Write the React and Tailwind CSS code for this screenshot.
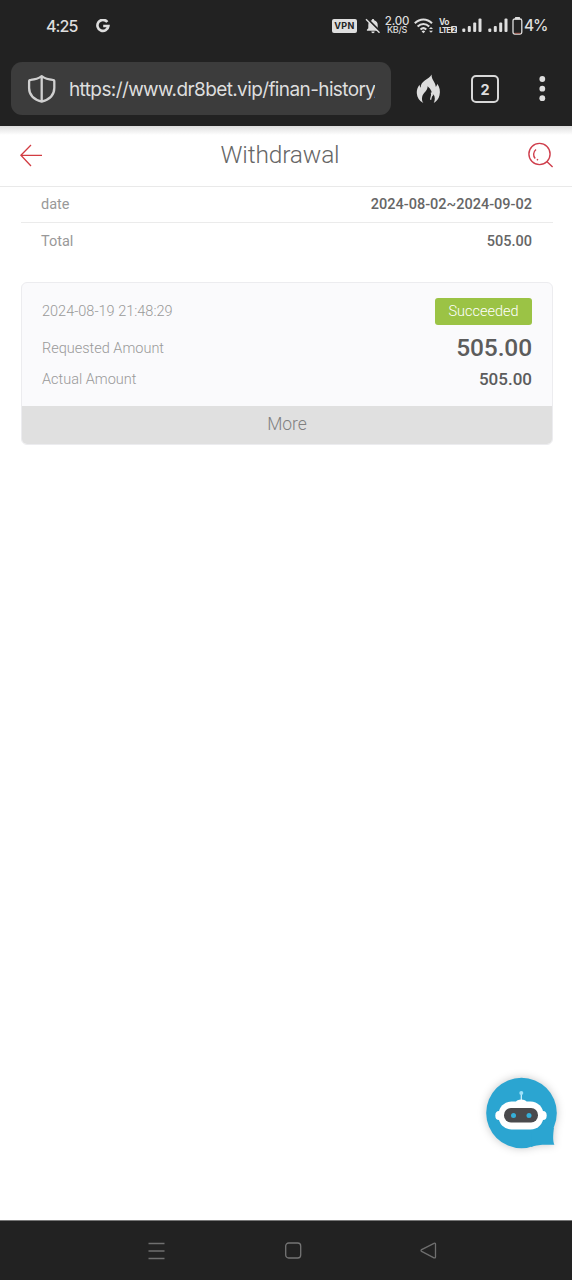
import React from "react";

function SignalBars() {
  return (
    <svg width="20" height="16" viewBox="0 0 20 16" fill="#dedede">
      <rect x="0.3" y="10.5" width="3" height="3.5" rx="1" />
      <rect x="5.8" y="8" width="3" height="6" rx="1" />
      <rect x="11.2" y="4.5" width="3" height="9.5" rx="1" />
      <rect x="16.5" y="0.5" width="3" height="13.5" rx="1" />
    </svg>
  );
}

function StatusBar() {
  return (
    <div className="flex h-[51px] items-center pl-[46px] font-['Inter','Noto_Sans',sans-serif] text-[#dedede]">
      <span className="w-[50px] whitespace-nowrap text-[16px] font-medium tracking-[-0.9px]">4:25</span>
      <svg width="14" height="14" viewBox="0 0 14 14" fill="none" stroke="#dedede" strokeWidth="2.6">
        <path d="M11.3 3A5.5 5.5 0 1 0 12.4 7H7.2" />
      </svg>
      <span className="ml-[222px] flex h-[14px] w-[25px] items-center justify-center rounded-[2px] bg-[#dedede] text-[9px] font-bold tracking-[0.4px] text-[#222]">VPN</span>
      <svg className="ml-[8px]" width="16" height="16" viewBox="0 0 16 16">
        <path d="M8 1c.7 0 1.2.5 1.2 1.2C11.500 2.800 12.700 4.500 12.700 7v3.300l1.400 1.500v1H1.900v-1l1.400-1.500V7c0-2.500 1.200-4.200 3.500-4.800C6.800 1.500 7.300 1 8 1ZM6.300 13.600h3.400a1.700 1.700 0 0 1-3.400 0Z" fill="#dedede" />
        <path d="m2.300.8 13 13" stroke="#222" strokeWidth="2" />
        <path d="m1 1.300 13.500 13.500" stroke="#dedede" strokeWidth="1.400" />
      </svg>
      <span className="ml-[4px] flex w-[24px] flex-col items-center font-medium">
        <span className="text-[11.500px] leading-[9px] tracking-[-0.200px]">2.00</span>
        <span className="text-[9px] leading-[8px] tracking-[-0.300px]">KB/S</span>
      </span>
      <svg className="ml-[5px]" width="20" height="16" viewBox="0 0 20 16" fill="none" stroke="#dedede" strokeWidth="2">
        <path d="M.8 5.300c5-5.200 12.200-5.200 17.200 0M3.600 8.500c3.500-3.500 8.100-3.500 11.600 0M6.500 11.500c1.800-1.700 4-1.700 5.800 0" />
        <path d="m7.600 13.400 1.800 1.900 1.800-1.900a2.600 2.600 0 0 0-3.600 0Z" fill="#dedede" stroke="none" />
        <path d="m15 11 2-2 2 2ZM15 12.700l2 2 2-2Z" fill="#dedede" stroke="none" />
      </svg>
      <span className="ml-[5px] flex w-[18px] flex-col font-bold">
        <span className="text-[8.500px] leading-[8px] tracking-[-0.500px]">Vo</span>
        <span className="flex items-center text-[8px] leading-[8px] tracking-[-0.900px]">
          LTE
          <span className="ml-[1px] flex h-[7px] w-[6px] items-center justify-center rounded-[1px] bg-[#dedede] text-[6px] tracking-normal text-[#222]">2</span>
        </span>
      </span>
      <span className="ml-[5px]"><SignalBars /></span>
      <span className="ml-[6px]"><SignalBars /></span>
      <svg className="ml-[4px]" width="11" height="18" viewBox="0 0 11 18">
        <rect x="3" y="0" width="5" height="2.500" rx=".5" fill="#dedede" />
        <rect x="1" y="2" width="8.800" height="15" rx="1.700" fill="none" stroke="#dedede" strokeWidth="1.300" />
        <path d="M2.500 16.300h6" stroke="#a45c50" />
      </svg>
      <span className="ml-[1px] text-[15.500px] font-medium tracking-[-1.200px]">4%</span>
    </div>
  );
}

function BrowserBar() {
  return (
    <div className="flex h-[75px] items-start pl-[11px] pt-[11px]">
      <div className="flex h-[53px] w-[380px] items-center rounded-[11px] bg-[#3c3c3c] pl-[16px]">
        <svg width="30" height="30" viewBox="0 0 30 30" fill="none" stroke="#d0d0d0" strokeWidth="2.300" strokeLinejoin="round">
          <path d="M14.700 2.200c-3 2.300-7 3.500-11 3.600-1 0-1.600.6-1.600 1.600V14c0 6.500 5 11.500 12.600 13.700C22.300 25.500 27.300 20.500 27.300 14V7.400c0-1-.6-1.600-1.600-1.600-4-.1-8-1.300-11-3.600ZM14.700 2.200v25.500" />
        </svg>
        <div className="ml-[12px] w-[306px] overflow-hidden whitespace-nowrap pt-[3px] font-['Inter','Noto_Sans',sans-serif] text-[19px] tracking-[-0.610px] text-[#dedede]">https://www.dr8bet.vip/finan-history/</div>
      </div>
      <svg className="ml-[25px] mt-[12px]" width="25" height="30" viewBox="0 0 25 30">
        <path d="M15.600.5c-.2 4 2.200 6.500 3.300 9 .5 1.200.8 2.200.8 3.300 1-.9 1.500-2 1.600-3.100 2.500 3.500 3.200 7.500 2.200 11.500-.8 3.500-2.700 6-5.700 7.800 1.300-2.700 1.500-5.700-.2-8.700-.2 1-.6 1.700-1.400 2.300.3-4-1-7.500-4.600-10.300.2 4.500-4.500 6.500-5.400 10.500-.6 2.500 0 4.600 1.100 6.300C3.400 27 1 23.700.8 19.300.6 16 1.500 13.400 3.500 10.800c.1 1.200.5 2.100 1.200 2.900C4.500 6.500 13 5.500 15.600.5Z" fill="#dedede" />
        <path d="M15.300 18.500c1.500 3-.8 4.700-.6 7.200" fill="none" stroke="#dedede" strokeWidth="1.300" />
      </svg>
      <div className="ml-[30px] mt-[13px] flex h-[28px] w-[28px] items-center justify-center rounded-[5px] border-[2.500px] border-[#d8d8d8] pt-px font-['Inter',sans-serif] text-[14.500px] font-bold text-[#dedede]">2</div>
      <svg className="ml-[40px] mt-[13px]" width="7" height="28" viewBox="0 0 7 28" fill="#dedede">
        <circle cx="3.300" cy="4" r="2.900" />
        <circle cx="3.300" cy="13.700" r="2.900" />
        <circle cx="3.300" cy="23.200" r="2.900" />
      </svg>
    </div>
  );
}

function PageHeader() {
  return (
    <header className="flex h-[61px] items-center justify-between border-b border-[#e9e9e9] bg-gradient-to-b from-[#dedede] via-white via-15% to-white pl-[20px] pr-[18px]">
      <svg width="23" height="24" viewBox="0 0 23 24" fill="none" stroke="#d23c42" strokeWidth="1.300">
        <path d="M22 11.300H1M11 1 .9 11.300 11 22" />
      </svg>
      <h1 className="mr-[10px] -mt-px text-[24.500px] font-light tracking-[-0.150px] text-[#666]">Withdrawal</h1>
      <svg className="-mt-[2px]" width="27" height="27" viewBox="0 0 27 27" fill="none" stroke="#cf3e4c" strokeWidth="1.400">
        <circle cx="12.500" cy="12" r="10.600" />
        <path d="m19.800 19.500 5.800 5.600M9 7.500c-3 2.500-3 6.500-.8 9M9.800 17.400l1.300.6" />
      </svg>
    </header>
  );
}

function Summary() {
  return (
    <section className="ml-[21px] mr-[19px] text-[14.500px] text-[#999]">
      <div className="flex h-[36px] items-center justify-between border-b border-[#ebebeb] pl-[20px] pr-[21px]">
        <span>date</span>
        <span className="font-medium text-[#666]">2024-08-02~2024-09-02</span>
      </div>
      <div className="flex h-[38px] items-center justify-between pl-[20px] pr-[21px]">
        <span>Total</span>
        <span className="font-medium text-[#666]">505.00</span>
      </div>
    </section>
  );
}

function Transaction() {
  return (
    <section className="ml-[21px] mr-[19px] mt-[21px] h-[163px] overflow-hidden rounded-[6px] border border-[#ececef] bg-[#fafafc]">
      <div className="flex h-[123px] flex-col px-[20px] pt-[15px] text-[14.500px] font-light text-[#999]">
        <div className="flex h-[27px] items-center justify-between">
          <span>2024-08-19 21:48:29</span>
          <span className="flex h-[27px] w-[97px] items-center justify-center rounded-[3px] bg-[#9bc345] text-white">Succeeded</span>
        </div>
        <div className="mt-[6px] flex h-[34px] items-center justify-between">
          <span className="pt-px">Requested Amount</span>
          <span className="text-[24.500px] font-medium tracking-[-0.100px] text-[#5c5c5c]">505.00</span>
        </div>
        <div className="flex h-[29px] items-center justify-between">
          <span>Actual Amount</span>
          <span className="text-[17px] font-medium text-[#5c5c5c]">505.00</span>
        </div>
      </div>
      <button className="block h-[38px] w-full bg-[#e0e0e0] pb-[2px] text-[17.500px] font-light text-[#808080]">More</button>
    </section>
  );
}

function ChatBot() {
  return (
    <svg className="absolute right-0 bottom-[60px] overflow-visible" width="100" height="100" viewBox="0 0 100 100">
      <g fill="#2ba5d1" style={{ filter: "drop-shadow(0 0 4px rgba(0,0,0,.22))" }}>
        <circle cx="49.500" cy="53" r="35.300" />
        <path d="M59 87c8-3 15-2 23.400-2.200-1.500-3.500-1.600-9-.4-17.300L60 69Z" />
      </g>
      <path d="M49.300 33v7" stroke="#d9f3ff" strokeWidth="1.200" />
      <circle cx="49.300" cy="33" r="2" fill="#9ee2fb" />
      <path d="M44 42c0-3.500 10.500-3.500 10.500 0Z" fill="white" />
      <ellipse cx="27" cy="55.500" rx="3.700" ry="4.500" fill="white" />
      <ellipse cx="71" cy="55.500" rx="3.700" ry="4.500" fill="white" />
      <rect x="26.500" y="41.500" width="45" height="28" rx="13" fill="white" />
      <rect x="32" y="48" width="34" height="14.500" rx="7" fill="#4a4a4d" />
      <circle cx="41.500" cy="55.500" r="2.500" fill="#35afd9" />
      <circle cx="57" cy="55.500" r="2.500" fill="#35afd9" />
    </svg>
  );
}

function NavigationBar() {
  return (
    <nav className="flex h-[60px] items-center border-t border-[#777] bg-[#222] pl-[148px]">
      <svg width="17" height="18" viewBox="0 0 17 18" stroke="#6f6f6f" strokeWidth="1.400">
        <path d="M.5 1.500h16M.5 9h16M.5 16.500h16" />
      </svg>
      <svg className="ml-[120px]" width="17" height="17" viewBox="0 0 17 17" fill="none">
        <rect x="0.700" y="1" width="15" height="15" rx="3" stroke="#757575" strokeWidth="1.300" />
      </svg>
      <svg className="ml-[118px]" width="17" height="17" viewBox="0 0 17 17" fill="none" stroke="#6f6f6f" strokeWidth="1.300" strokeLinejoin="round">
        <path d="M1.600 7.600 14 1.300q1.500-.6 1.500 1v12.500q0 1.600-1.500 1L1.600 9.400q-1.200-.9 0-1.800Z" />
      </svg>
    </nav>
  );
}

export default function App() {
  return (
    <div className="relative flex h-[1280px] w-[572px] flex-col overflow-hidden bg-white font-['Roboto',sans-serif]">
      <div className="h-[126px] bg-[#222]">
        <StatusBar />
        <BrowserBar />
      </div>
      <PageHeader />
      <main className="relative flex-1">
        <Summary />
        <Transaction />
        <ChatBot />
      </main>
      <NavigationBar />
    </div>
  );
}
